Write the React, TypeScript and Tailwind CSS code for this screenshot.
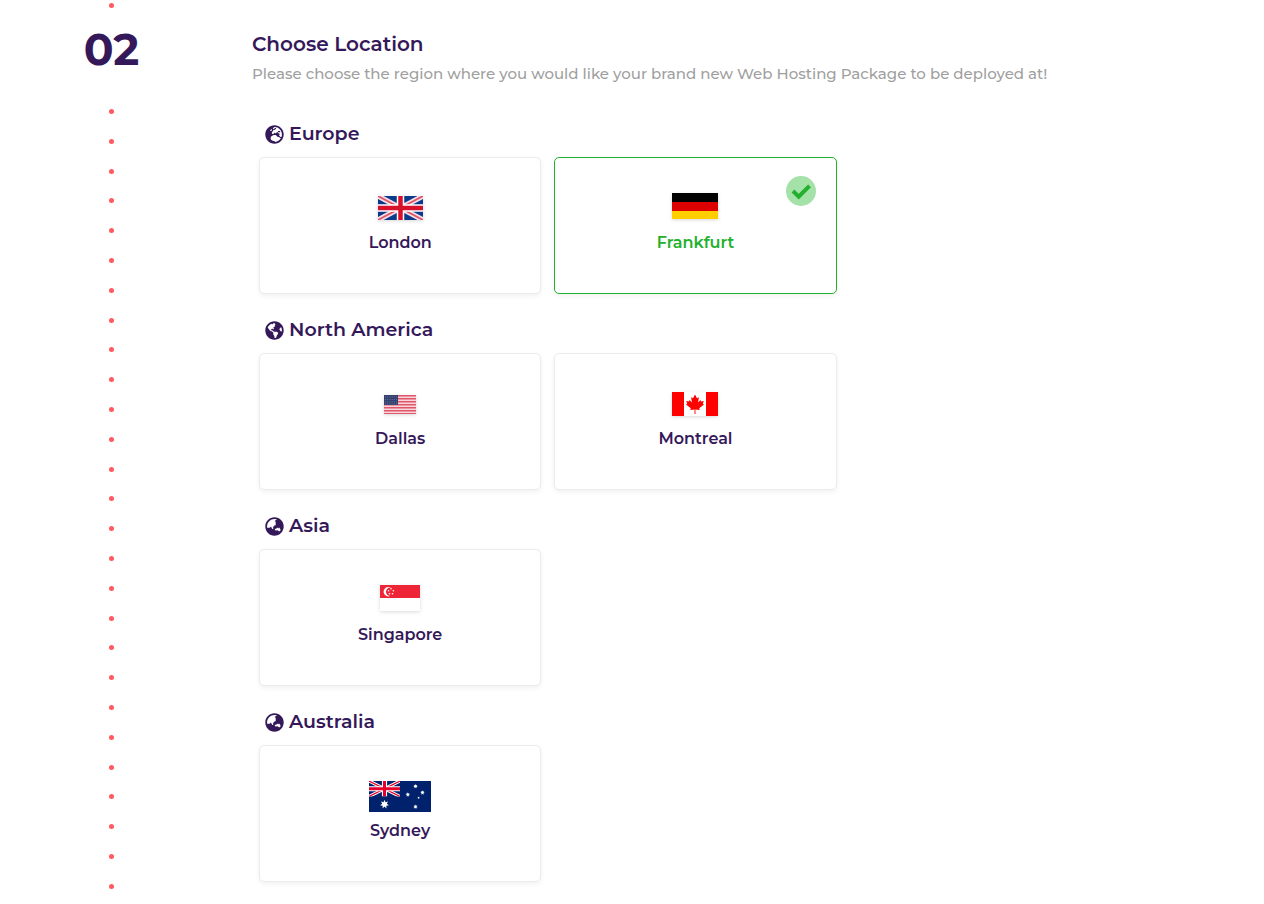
import { useState } from "react";
import type { ComponentType, ReactNode } from "react";
import { FaGlobeEurope, FaGlobeAmericas, FaGlobeAsia } from "react-icons/fa";

function FlagUK() {
  return (
    <svg viewBox="0 0 60 32" className="h-6 w-[45px] drop-shadow" aria-hidden="true" preserveAspectRatio="none">
      <rect width="60" height="32" fill="#0b3a8a" />
      <path d="M0 0 60 32M60 0 0 32" stroke="#f6dfe4" strokeWidth="7" />
      <path d="M0 0 60 32M60 0 0 32" stroke="#e0556a" strokeWidth="2.4" />
      <path d="M30 0V32M0 16H60" stroke="#fff" strokeWidth="10" />
      <path d="M30 0V32M0 16H60" stroke="#d9102c" strokeWidth="6" />
    </svg>
  );
}

function FlagGermany() {
  return (
    <svg viewBox="0 0 46 30" className="h-[30px] w-[46px] drop-shadow" aria-hidden="true">
      <rect width="46" height="9" fill="#000" />
      <rect y="9" width="46" height="9" fill="#d00" />
      <rect y="18" width="46" height="8" fill="#ffce00" />
    </svg>
  );
}

function FlagUSA() {
  return (
    <svg viewBox="0 0 32 19" className="h-[19px] w-8 drop-shadow" aria-hidden="true">
      <rect width="32" height="19" fill="#f7d5da" />
      {[0, 3, 6, 9, 12, 15, 18].map((y) => (
        <rect key={y} y={y} width="32" height="1.5" fill="#e0566a" />
      ))}
      <rect width="14" height="10" fill="#34406f" />
      <path d="M1 2H14M1 4.5H14M1 7H14M1 9H14" stroke="#6d779d" strokeWidth=".9" strokeDasharray="1 1.2" />
    </svg>
  );
}

function FlagCanada() {
  return (
    <svg viewBox="0 0 46 24" className="h-6 w-[46px] drop-shadow" aria-hidden="true">
      <rect width="46" height="24" fill="#fff" />
      <rect width="12" height="24" fill="#f00" />
      <rect x="34" width="12" height="24" fill="#f00" />
      <path
        d="M23 2.5 21 6.2 19 5.2 20 10.4 17.6 8 17 9.4 14.2 8.9 15.2 11.8 14 12.5 18.8 16.3 18.2 18 22.6 17.4 22.5 22H23.5L23.4 17.4 27.8 18 27.2 16.3 32 12.5 30.8 11.8 31.8 8.9 29 9.4 28.4 8 26 10.4 27 5.2 25 6.2Z"
        fill="#f00"
      />
    </svg>
  );
}

function FlagSingapore() {
  return (
    <svg viewBox="0 0 40 30" className="h-[30px] w-10 drop-shadow" aria-hidden="true">
      <rect width="40" height="26" fill="#fff" />
      <rect width="40" height="13" fill="#ee2536" />
      <circle cx="8.3" cy="6.7" r="4.7" fill="#fff" />
      <circle cx="10.3" cy="6.7" r="4.3" fill="#ee2536" />
      <g fill="#fff">
        <circle cx="11" cy="3.8" r=".8" />
        <circle cx="8.6" cy="5.8" r=".8" />
        <circle cx="13.4" cy="5.8" r=".8" />
        <circle cx="9.5" cy="8.7" r=".8" />
        <circle cx="12.5" cy="8.7" r=".8" />
      </g>
    </svg>
  );
}

const starPoints = (cx: number, cy: number, r: number, n: number) =>
  Array.from({ length: n * 2 }, (_, i) => {
    const radius = i % 2 ? r * 0.5 : r;
    const a = (Math.PI * i) / n - Math.PI / 2;
    return `${cx + radius * Math.cos(a)},${cy + radius * Math.sin(a)}`;
  }).join(" ");

function FlagAustralia() {
  return (
    <svg viewBox="0 0 62 31" className="h-[31px] w-[62px]" aria-hidden="true">
      <rect width="62" height="31" fill="#00216b" />
      <svg width="31" height="15.5" viewBox="0 0 31 15.5">
        <path d="M0 0 31 15.5M31 0 0 15.5" stroke="#fff" strokeWidth="3.2" />
        <path d="M0 0 31 15.5M31 0 0 15.5" stroke="#e4002b" strokeWidth="1.2" />
        <path d="M15.5 0V15.5M0 7.75H31" stroke="#fff" strokeWidth="5.2" />
        <path d="M15.5 0V15.5M0 7.75H31" stroke="#e4002b" strokeWidth="3" />
      </svg>
      <g fill="#fff">
        <polygon points={starPoints(15.5, 23.3, 4.6, 7)} />
        <polygon points={starPoints(46.5, 5.3, 2.3, 7)} />
        <polygon points={starPoints(38.8, 13.6, 2.3, 7)} />
        <polygon points={starPoints(53.5, 11.6, 2.3, 7)} />
        <polygon points={starPoints(46.5, 25.8, 2.3, 7)} />
        <polygon points={starPoints(49.6, 16.8, 1.3, 5)} />
      </g>
    </svg>
  );
}

type City = { name: string; flag: ReactNode };
type Region = { name: string; icon: ComponentType<{ className?: string }>; cities: City[] };

const regions: Region[] = [
  {
    name: "Europe",
    icon: FaGlobeEurope,
    cities: [
      { name: "London", flag: <FlagUK /> },
      { name: "Frankfurt", flag: <FlagGermany /> },
    ],
  },
  {
    name: "North America",
    icon: FaGlobeAmericas,
    cities: [
      { name: "Dallas", flag: <FlagUSA /> },
      { name: "Montreal", flag: <FlagCanada /> },
    ],
  },
  { name: "Asia", icon: FaGlobeAsia, cities: [{ name: "Singapore", flag: <FlagSingapore /> }] },
  { name: "Australia", icon: FaGlobeAsia, cities: [{ name: "Sydney", flag: <FlagAustralia /> }] },
];

function Dot() {
  return <span className="size-[5px] rounded-full bg-[#ff5a5f]" />;
}

function LocationCard({ city, checked, onSelect }: { city: City; checked: boolean; onSelect: () => void }) {
  return (
    <label
      className={`relative flex h-[137px] cursor-pointer flex-col items-center gap-[3px] rounded-[5px] border bg-white pt-[30px] shadow-[0_2px_5px_rgba(0,0,0,0.06)] ${
        checked ? "border-[#22b02e] text-[#22b02e]" : "border-[#eeeaec] text-[#35185a]"
      }`}
    >
      <input type="radio" name="location" className="sr-only" checked={checked} onChange={onSelect} />
      <span className="flex h-10 items-center">{city.flag}</span>
      <span className="text-base leading-6 font-semibold">{city.name}</span>
      {checked && (
        <span className="absolute top-[18px] right-5 rounded-full bg-[#a5e2a9]">
          <svg viewBox="0 0 30 30" className="size-[30px]" aria-hidden="true">
            <path d="M7 15 12.7 20.7 23.5 9.9" fill="none" stroke="#22b02e" strokeWidth="4" />
          </svg>
        </span>
      )}
    </label>
  );
}

export default function App() {
  const [selected, setSelected] = useState("Frankfurt");
  return (
    <main className="flex bg-white pr-[132px] pb-[15px] font-['Montserrat','Inter',sans-serif] text-[#35185a]">
      <div className="mr-[85px] ml-14 flex w-[111px] shrink-0 flex-col items-center pt-[3px]">
        <Dot />
        <span className="mt-[17px] mb-9 text-[44px] leading-12 font-bold">02</span>
        <div className="flex flex-1 flex-col justify-between">
          {Array.from({ length: 27 }, (_, i) => (
            <Dot key={i} />
          ))}
        </div>
      </div>
      <section className="min-w-0 flex-1 pt-8 pb-[7px]">
        <h2 className="text-xl leading-6 font-semibold">Choose Location</h2>
        <p className="mt-[6px] text-[15px] leading-6 font-medium text-[#9f9f9f]">
          Please choose the region where you would like your brand new Web Hosting Package to be deployed at!
        </p>
        <div className="mt-9 flex flex-col gap-6 pl-[7px]">
          {regions.map(({ name, icon: Icon, cities }) => (
            <fieldset key={name}>
              <legend className="mb-[11px] flex items-center gap-[5px] pl-[6px] text-[19px] leading-6 font-semibold">
                <Icon className="size-[19px]" />
                {name}
              </legend>
              <div className="grid grid-cols-3 gap-[13px]">
                {cities.map((city) => (
                  <LocationCard
                    key={city.name}
                    city={city}
                    checked={selected === city.name}
                    onSelect={() => setSelected(city.name)}
                  />
                ))}
              </div>
            </fieldset>
          ))}
        </div>
      </section>
    </main>
  );
}
